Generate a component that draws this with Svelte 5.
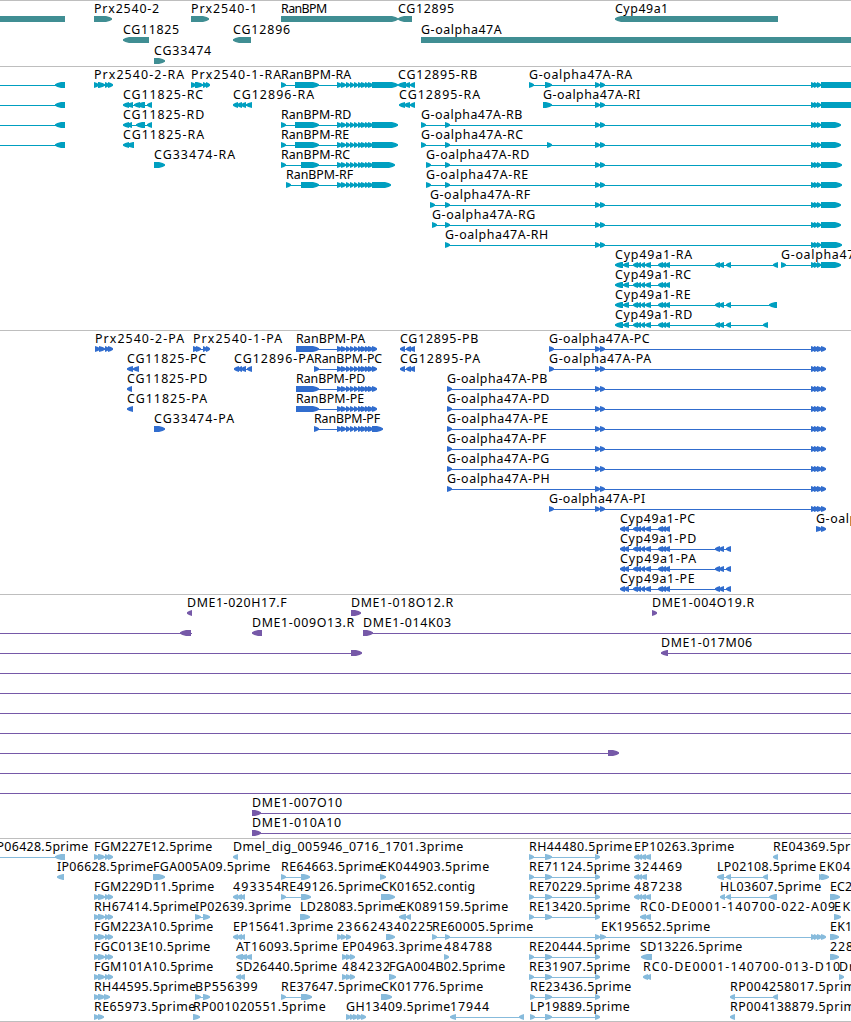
<script lang="ts">
    // label, label start, label end, strand, exons, [line start, line end]
    type Feature = [string, number, number, number, string, number[]?]

    type Track = {
        name: string
        color: string
        rowHeight: number
        rows: Feature[][]
    }

    const WIDTH = 851
    const HEAD = 6

    const ranExons = "337-342 341-346 346-350 350-354 354-358 358-362 361-366 365-369 368-373"
    const goEnd = "595-600 600-605 811-816 814-818 817-821"
    const goProtein = "595-600 600-605 811-816 814-819 817-822 821-826"
    const cypExons = "633-638 637-641 641-645 645-651 658-663 662-666 665-670"
    const cypTail = "715-720 719-724 726-731"
    const prx2 = "94-99 98-105 105-109 108-113"
    const est = "529-534 545-552 595-600"
    const ep = "634-639 638-642 641-646 645-651"

    const upstream: Feature = ["", 0, 0, -1, "55-65", [0, 65]]
    const full: Feature = ["", 0, 0, 1, "", [0, WIDTH]]

    const tracks: Track[] = [
        {
            name: "genes",
            color: "#408e93",
            rowHeight: 21,
            rows: [
                [
                    ["", 0, 0, 1, "-20-65b"],
                    ["Prx2540-2", 94, 159, 1, "94-112"],
                    ["Prx2540-1", 191, 257, 1, "191-209"],
                    ["RanBPM", 281, 327, 1, "281-398"],
                    ["CG12895", 398, 454, -1, "398-412"],
                    ["Cyp49a1", 615, 668, -1, "615-778"],
                ],
                [
                    ["CG11825", 123, 179, -1, "123-149"],
                    ["CG12896", 233, 290, -1, "233-251"],
                    ["G-oalpha47A", 421, 501.5, 1, "421-880"],
                ],
                [["CG33474", 154, 211, 1, "154-165"]],
            ],
        },
        {
            name: "transcripts",
            color: "#009fc0",
            rowHeight: 20,
            rows: [
                [
                    upstream,
                    ["Prx2540-2-RA", 94, 184, 1, prx2],
                    ["Prx2540-1-RA", 191, 281, 1, "191-196 195-203 203-207 206-210"],
                    ["RanBPM-RA", 281, 351, 1, `281-286 295-319 ${ranExons} 372-398`],
                    ["CG12895-RB", 398, 477, -1, "398-406 405-410 410-415"],
                    ["G-oalpha47A-RA", 529, 632, 1, `529-534 545-552 ${goEnd} 821-880`],
                ],
                [
                    upstream,
                    ["CG11825-RC", 123, 203, -1, "123-129 127-133 134-140 137-145 147-152"],
                    ["CG12896-RA", 233, 314, -1, "233-238 237-242 241-246 246-252"],
                    ["CG12895-RA", 399, 480, -1, "399-405 404-410 410-415"],
                    ["G-oalpha47A-RI", 543, 640, 1, `543-552 ${goEnd} 821-880`],
                ],
                [
                    upstream,
                    ["CG11825-RD", 123, 204, -1, "123-129 127-132 136-145 147-152"],
                    ["RanBPM-RD", 281, 351, 1, `281-286 295-319 ${ranExons} 372-398`],
                    ["G-oalpha47A-RB", 421, 522, 1, `421-426 445-450 ${goEnd} 821-841`],
                ],
                [
                    upstream,
                    ["CG11825-RA", 123, 204, -1, "123-129 127-134"],
                    ["RanBPM-RE", 281, 349, 1, `281-286 295-319 ${ranExons} 372-398`],
                    ["G-oalpha47A-RC", 421, 523, 1, `421-426 445-450 547-552 ${goEnd} 821-841`],
                ],
                [
                    ["CG33474-RA", 154, 235, 1, "154-165"],
                    ["RanBPM-RC", 281, 350, 1, `281-286 301-319 ${ranExons} 372-395`],
                    ["G-oalpha47A-RD", 426, 529, 1, `426-431 445-450 ${goEnd} 821-842`],
                ],
                [
                    ["RanBPM-RF", 286, 353, 1, `286-291 301-319 ${ranExons} 372-391`],
                    ["G-oalpha47A-RE", 426, 528, 1, `426-431 445-450 ${goEnd} 821-842`],
                ],
                [["G-oalpha47A-RF", 430, 530, 1, `430-435 445-450 ${goEnd} 821-841`]],
                [["G-oalpha47A-RG", 432, 535, 1, `432-437 445-450 ${goEnd} 821-841`]],
                [["G-oalpha47A-RH", 445, 548, 1, `445-450 ${goEnd} 821-842`]],
                [
                    ["Cyp49a1-RA", 615, 692, -1, `615-623 623-629 ${cypExons} ${cypTail} 773-778`],
                    ["G-oalpha47A-RJ", 781, 880, 1, "781-786 811-816 814-818 817-821 821-841"],
                ],
                [["Cyp49a1-RC", 615, 691, -1, `615-623 623-629 ${cypExons}`]],
                [["Cyp49a1-RE", 615, 690.5, -1, `615-623 623-629 ${cypExons} ${cypTail} 769-777`]],
                [["Cyp49a1-RD", 615, 692, -1, `615-623 623-629 ${cypExons} ${cypTail} 763-768`]],
            ],
        },
        {
            name: "proteins",
            color: "#316dce",
            rowHeight: 20,
            rows: [
                [
                    ["Prx2540-2-PA", 95, 184, 1, "95-100 99-105 105-109 108-113"],
                    ["Prx2540-1-PA", 193, 282, 1, "193-198 196-201 203-207 206-210"],
                    ["RanBPM-PA", 296, 365, 1, `296-319 ${ranExons} 372-377`],
                    ["CG12895-PB", 400, 478, -1, "400-405 406-411 410-415"],
                    ["G-oalpha47A-PC", 549, 649.5, 1, `549-554 ${goProtein}`],
                ],
                [
                    ["CG11825-PC", 127, 206, -1, "127-133 133-139"],
                    ["CG12896-PA", 234, 314, -1, "234-239 238-242 241-246 247-252"],
                    ["RanBPM-PC", 314, 382, 1, `314-319 ${ranExons} 372-377`],
                    ["CG12895-PA", 400, 480, -1, "400-405 406-411 410-415"],
                    ["G-oalpha47A-PA", 549, 651, 1, `549-554 ${goProtein}`],
                ],
                [
                    ["CG11825-PD", 127, 207, -1, "127-132"],
                    ["RanBPM-PD", 296, 365, 1, `296-319 ${ranExons} 372-377`],
                    ["G-oalpha47A-PB", 447, 547, 1, `447-452 ${goProtein}`],
                ],
                [
                    ["CG11825-PA", 127, 207, -1, "127-133"],
                    ["RanBPM-PE", 296, 364, 1, `296-319 ${ranExons} 372-377`],
                    ["G-oalpha47A-PD", 447, 549, 1, `447-452 ${goProtein}`],
                ],
                [
                    ["CG33474-PA", 154, 234, 1, "154-165"],
                    ["RanBPM-PF", 314, 380, 1, `314-319 ${ranExons} 372-383`],
                    ["G-oalpha47A-PE", 447, 548, 1, `447-452 ${goProtein}`],
                ],
                [["G-oalpha47A-PF", 447, 546, 1, `447-452 ${goProtein}`]],
                [["G-oalpha47A-PG", 447, 549, 1, `447-452 ${goProtein}`]],
                [["G-oalpha47A-PH", 447, 549.5, 1, `447-452 ${goProtein}`]],
                [["G-oalpha47A-PI", 549, 645, 1, `549-554 ${goProtein}`]],
                [
                    ["Cyp49a1-PC", 620, 695, -1, `620-625 624-629 ${cypExons}`],
                    ["G-oalpha47A-PJ", 816, 913, 1, "816-822 821-826"],
                ],
                [["Cyp49a1-PD", 620, 696, -1, `620-625 624-629 ${cypExons} ${cypTail}`]],
                [["Cyp49a1-PA", 620, 696, -1, `620-625 624-629 ${cypExons} ${cypTail}`]],
                [["Cyp49a1-PE", 620, 694.5, -1, `620-625 624-629 ${cypExons} ${cypTail}`]],
            ],
        },
        {
            name: "bacs",
            color: "#7659a8",
            rowHeight: 20,
            rows: [
                [
                    ["DME1-020H17.F", 187, 286.5, -1, "187-192"],
                    ["DME1-018O12.R", 351, 453, 1, "351-361"],
                    ["DME1-004O19.R", 652, 754, 1, "652-657"],
                ],
                [
                    ["", 0, 0, -1, "180-191", [0, 192]],
                    ["DME1-009O13.R", 252, 354, -1, "252-262"],
                    ["DME1-014K03", 363, 451, 1, "363-373", [363, WIDTH]],
                ],
                [
                    ["", 0, 0, 1, "351-362", [0, 351]],
                    ["DME1-017M06", 661, 752, -1, "661-668", [661, WIDTH]],
                ],
                [full],
                [full],
                [full],
                [full],
                [["", 0, 0, 1, "608-619", [0, 608]]],
                [full],
                [full],
                [["DME1-007O10", 252, 342, 1, "252-261", [252, WIDTH]]],
                [["DME1-010A10", 252, 341, 1, "252-261", [252, WIDTH]]],
            ],
        },
        {
            name: "ests",
            color: "#87bbdc",
            rowHeight: 20,
            rows: [
                [
                    ["IP06428.5prime", -8, 88, -1, "55-65", [0, 65]],
                    ["FGM227E12.5prime", 94, 212, 1, prx2],
                    ["Dmel_dig_005946_0716_1701.3prime", 233, 463, -1, "233-238"],
                    ["RH44480.5prime", 529, 632, 1, est],
                    ["EP10263.3prime", 634, 734, -1, ep],
                    ["RE04369.5prime", 773, 873, -1, "773-778"],
                ],
                [
                    ["IP06628.5prime", 57, 153, -1, "57-64"],
                    ["FGA005A09.5prime", 153, 270, 1, "153-165"],
                    ["RE64663.5prime", 281, 381.5, 1, "281-286 301-310"],
                    ["EK044903.5prime", 380, 489, 1, "380-386"],
                    ["RE71124.5prime", 529, 630, 1, est],
                    ["324469", 634, 682, -1, "634-639 638-642 641-647"],
                    ["LP02108.5prime", 717, 816, -1, "717-724 726-731 763-768"],
                    ["EK04", 819, 850, 1, "819-825 821-829"],
                ],
                [
                    ["FGM229D11.5prime", 94, 214, 1, prx2],
                    ["493354", 233, 281, -1, "233-238 237-242 241-245"],
                    ["RE49126.5prime", 281, 381.5, 1, "281-286 301-311"],
                    ["CK01652.contig", 381, 475, 1, "381-395"],
                    ["RE70229.5prime", 529, 630, 1, est],
                    ["487238", 634, 682, -1, ep],
                    ["HL03607.5prime", 720, 821, -1, "720-725 726-731 769-777"],
                    ["EC2", 830, 852, 1, "830-840"],
                ],
                [
                    ["RH67414.5prime", 94, 196, 1, prx2],
                    ["IP02639.3prime", 195, 291, 1, "195-201 203-210"],
                    ["LD28083.5prime", 300, 400.5, 1, "300-310"],
                    ["EK089159.5prime", 399, 508, -1, "399-406 406-411"],
                    ["RE13420.5prime", 529, 630, 1, est],
                    ["RC0-DE0001-140700-022-A09", 640, 835, -1, "640-646 645-651"],
                    ["EK", 834, 850, 1, "834-841"],
                ],
                [
                    ["FGM223A10.5prime", 94, 213, 1, prx2],
                    ["EP15641.3prime", 233, 333, -1, "233-238 237-242 241-245"],
                    ["236624", 337, 385.5, 1, "337-342 341-346 346-351"],
                    ["340225", 386, 433, 1, "386-395"],
                    ["RE60005.5prime", 432, 533, 1, "432-437 445-450 595-600"],
                    ["EK195652.5prime", 601, 710, 1, "600-606 811-816 814-818 817-822 821-826"],
                    ["EK1", 830, 852, 1, "830-839"],
                ],
                [
                    ["FGC013E10.5prime", 94, 210, 1, prx2],
                    ["AT16093.5prime", 236, 337.5, -1, "236-243 241-247 246-252"],
                    ["EP04963.3prime", 342, 442, 1, "342-347 346-351 350-355"],
                    ["484788", 444, 492, 1, "444-449"],
                    ["RE20444.5prime", 529, 630, 1, est],
                    ["SD13226.5prime", 640, 742, -1, "641-652"],
                    ["228", 830, 853, 1, "830-839"],
                ],
                [
                    ["FGM101A10.5prime", 94, 213, 1, prx2],
                    ["SD26440.5prime", 236, 337, -1, "236-241 240-245"],
                    ["484232", 342, 390, 1, "342-347 346-351 350-355"],
                    ["FGA004B02.5prime", 389, 505, 1, "389-396"],
                    ["RE31907.5prime", 529, 630, 1, est],
                    ["RC0-DE0001-140700-013-D10", 643, 840, -1, "643-648 646-651"],
                    ["Dr", 839, 854, 1, "839-844"],
                ],
                [
                    ["RH44595.5prime", 94, 196, 1, "94-99 98-105 104-110"],
                    ["BP556399", 195, 257.5, 1, "195-201 203-210"],
                    ["RE37647.5prime", 281, 381.5, 1, "281-286 301-312"],
                    ["CK01776.5prime", 381, 483, 1, "381-392"],
                    ["RE23436.5prime", 530, 631, 1, "530-535 545-552 595-600"],
                    ["RP004258017.5prime", 730, 862.5, -1, "730-735 773-778"],
                ],
                [
                    ["RE65973.5prime", 94, 195, 1, "94-99 98-104"],
                    ["RP001020551.5prime", 193, 325.5, 1, "193-200"],
                    ["GH13409.5prime", 346, 450, 1, "346-351 350-354 353-358 357-362 361-366"],
                    ["17944", 450, 489, -1, "450-456 519-524"],
                    ["LP19889.5prime", 530, 629.5, 1, "530-535 545-552 595-600"],
                    ["RP004138879.5prime", 730, 862.5, -1, "730-735"],
                ],
            ],
        },
    ]

    function parse(exons: string) {
        return [...exons.matchAll(/(-?\d+)-(\d+)(b?)/g)].map(m => ({
            start: +m[1],
            end: +m[2],
            blunt: m[3] === "b",
        }))
    }

    function shape(start: number, end: number, strand: number, blunt: boolean) {
        if (blunt) return `M${start} 13H${end}V19H${start}Z`
        const head = Math.min(HEAD, end - start)
        const tip = strand > 0 ? end : start
        const tail = strand > 0 ? start : end
        const neck = tip - strand * head
        const bend = tip - strand * head * 0.4
        return `M${tail} 13H${neck}L${bend} 14.1L${tip} 15.3V16.7L${bend} 17.9L${neck} 19H${tail}Z`
    }

    function extent(feature: Feature) {
        if (feature[5]) return feature[5]
        const list = parse(feature[4])
        return [list[0].start + 1, list[list.length - 1].end - 1]
    }
</script>

<main>
    {#each tracks as track}
        <section class="track {track.name}" style:color={track.color}>
            {#each track.rows as row}
                <svg width={WIDTH} height={track.rowHeight}>
                    {#each row as feature}
                        {@const [from, to] = extent(feature)}
                        <rect x={from} y="16" width={to - from} height="1" />
                        {#each parse(feature[4]) as exon}
                            <path d={shape(exon.start, exon.end, feature[3], exon.blunt)} />
                        {/each}
                        {#if feature[0]}
                            <text
                                x={feature[1]}
                                y="10"
                                textLength={feature[2] - feature[1] + 0.2}
                            >{feature[0]}</text>
                        {/if}
                    {/each}
                </svg>
            {/each}
        </section>
    {/each}
</main>

<style>
    :global(body) {
        background: #fff;
    }

    main {
        width: 851px;
        height: 1022px;
        box-sizing: border-box;
        overflow: hidden;
        border-bottom: 1px solid #bebebe;
    }

    .track {
        display: flex;
        flex-direction: column;
        padding: 2px 0 1px;
        border-top: 1px solid #bebebe;
    }

    .genes,
    .ests {
        padding-bottom: 0;
    }

    svg {
        display: block;
        flex: none;
        overflow: visible;
        fill: currentColor;
    }

    rect {
        shape-rendering: crispEdges;
    }

    text {
        font-family: "Noto Sans", "DejaVu Sans", sans-serif;
        font-size: 12.4px;
        fill: #000;
    }
</style>
